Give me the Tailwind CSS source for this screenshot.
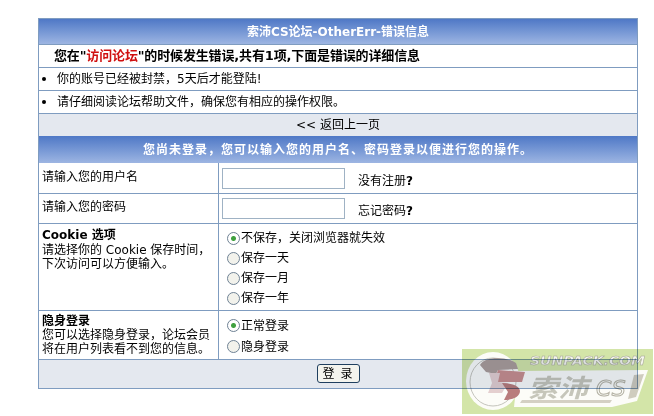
<!DOCTYPE html>
<html lang="zh-CN">
<head>
  <meta charset="UTF-8" />
  <title>索沛CS论坛-OtherErr-错误信息</title>
  <meta name="viewport" content="width=device-width, initial-scale=1.0" />
  <script src="https://cdn.jsdelivr.net/npm/@tailwindcss/browser@4"></script>
</head>
<body class="relative w-[654px] h-[416px] overflow-hidden bg-white text-[12px] text-black font-['DejaVu_Sans','Noto_Sans_CJK_SC',sans-serif]">

  <div class="pt-[18px] pl-[38px]">
    <div class="w-[600px] border border-[#7f9cc0]">

      <!-- error box -->
      <div class="h-[25px] flex items-center justify-center text-white font-bold bg-gradient-to-b from-[#4f78c6] to-[#9db5e2]">索沛CS论坛-OtherErr-错误信息</div>
      <div class="h-[23px] flex items-center pl-[15px] border-t border-[#7f9cc0] font-bold text-[13px] tracking-[-0.15px]">您在"<span class="text-[#d01010]">访问论坛</span>"的时候发生错误,共有1项,下面是错误的详细信息</div>
      <div class="h-[23px] flex items-center pl-[3px] border-t border-[#7f9cc0]"><span class="w-2 h-1 mr-[7px] flex items-center"><span class="block w-1 h-1 rounded-full bg-black"></span></span>你的账号已经被封禁，5天后才能登陆!</div>
      <div class="h-[23px] flex items-center pl-[3px] border-t border-[#7f9cc0]"><span class="w-2 h-1 mr-[7px] flex items-center"><span class="block w-1 h-1 rounded-full bg-black"></span></span>请仔细阅读论坛帮助文件，确保您有相应的操作权限。</div>
      <div class="h-[23px] flex items-center justify-center border-t border-[#7f9cc0] bg-[#e4e8ef]">&lt;&lt; 返回上一页</div>

      <!-- login form -->
      <div class="h-[27px] flex items-center justify-center text-white font-bold tracking-[1px] bg-gradient-to-b from-[#4f78c6] to-[#9db5e2]">您尚未登录，您可以输入您的用户名、密码登录以便进行您的操作。</div>

      <div class="h-[30px] flex">
        <div class="w-[180px] pl-[3px] pt-[5px] border-r border-[#7f9cc0]">请输入您的用户名</div>
        <div class="flex items-center pl-[3px]">
          <input type="text" class="w-[123px] h-[21px] bg-white border border-[#9fb2c4]" />
          <span class="ml-[13px] mt-[5px]">没有注册<b>?</b></span>
        </div>
      </div>

      <div class="h-[30px] flex border-t border-[#7f9cc0]">
        <div class="w-[180px] pl-[3px] pt-[4px] border-r border-[#7f9cc0]">请输入您的密码</div>
        <div class="flex items-center pl-[3px]">
          <input type="text" class="w-[123px] h-[21px] bg-white border border-[#9fb2c4]" />
          <span class="ml-[13px] mt-[5px]">忘记密码<b>?</b></span>
        </div>
      </div>

      <div class="h-[87px] flex border-t border-[#7f9cc0]">
        <div class="w-[180px] pl-[3px] pt-[4px] leading-[14px] border-r border-[#7f9cc0]">
          <div class="font-bold mb-[1px]">Cookie 选项</div>
          <div>请选择你的 Cookie 保存时间，</div>
          <div>下次访问可以方便输入。</div>
        </div>
        <div class="pl-[8px] pt-[4px]">
          <label class="h-[20px] flex items-center gap-[1px]"><input type="radio" name="cookie" checked class="appearance-none m-0 w-[13px] h-[13px] rounded-full border border-[#6f8295] bg-[#f2f2ec] checked:bg-[radial-gradient(circle,#3fa03f_0_2px,#ffffff_3px)]" />不保存，关闭浏览器就失效</label>
          <label class="h-[20px] flex items-center gap-[1px]"><input type="radio" name="cookie" class="appearance-none m-0 w-[13px] h-[13px] rounded-full border border-[#6f8295] bg-[#f2f2ec] checked:bg-[radial-gradient(circle,#3fa03f_0_2px,#ffffff_3px)]" />保存一天</label>
          <label class="h-[20px] flex items-center gap-[1px]"><input type="radio" name="cookie" class="appearance-none m-0 w-[13px] h-[13px] rounded-full border border-[#6f8295] bg-[#f2f2ec] checked:bg-[radial-gradient(circle,#3fa03f_0_2px,#ffffff_3px)]" />保存一月</label>
          <label class="h-[20px] flex items-center gap-[1px]"><input type="radio" name="cookie" class="appearance-none m-0 w-[13px] h-[13px] rounded-full border border-[#6f8295] bg-[#f2f2ec] checked:bg-[radial-gradient(circle,#3fa03f_0_2px,#ffffff_3px)]" />保存一年</label>
        </div>
      </div>

      <div class="h-[49px] flex border-t border-[#7f9cc0]">
        <div class="w-[180px] pl-[3px] pt-[3px] leading-[14px] border-r border-[#7f9cc0]">
          <div class="font-bold">隐身登录</div>
          <div>您可以选择隐身登录，论坛会员</div>
          <div>将在用户列表看不到您的信息。</div>
        </div>
        <div class="pl-[8px] pt-[4px]">
          <label class="h-[21px] flex items-center gap-[1px]"><input type="radio" name="hide" checked class="appearance-none m-0 w-[13px] h-[13px] rounded-full border border-[#6f8295] bg-[#f2f2ec] checked:bg-[radial-gradient(circle,#3fa03f_0_2px,#ffffff_3px)]" />正常登录</label>
          <label class="h-[21px] flex items-center gap-[1px]"><input type="radio" name="hide" class="appearance-none m-0 w-[13px] h-[13px] rounded-full border border-[#6f8295] bg-[#f2f2ec] checked:bg-[radial-gradient(circle,#3fa03f_0_2px,#ffffff_3px)]" />隐身登录</label>
        </div>
      </div>

      <div class="h-[29px] flex items-start justify-center pt-[4px] border-t border-[#7f9cc0] bg-[#e4e8ef]">
        <button class="w-[43px] h-[19px] bg-[#f4f4ee] border border-[#1f3f5f] rounded-[3px] text-[12px] leading-none tracking-[1px]">登 录</button>
      </div>
    </div>
  </div>

  <!-- watermark -->
  <svg class="absolute left-[462px] top-[349px] mix-blend-multiply" width="191" height="65" viewBox="0 0 191 65">
    <rect width="191" height="65" fill="#d3e5a8"/>
    <!-- band -->
    <path d="M56 22L186 21L175 52L150 58L52 58Z" fill="#fcfcf8"/>
    <path d="M60 51L150 51L148 54L58 54Z" fill="#d4d0c4"/>
    <path d="M172 26L182 25L174 48L166 50Z" fill="#cfccbe"/>
    <!-- round badge -->
    <ellipse cx="31" cy="32" rx="27" ry="29" fill="#fcfcf8"/>
    <ellipse cx="31" cy="33" rx="23" ry="24" fill="none" stroke="#c4c4bc" stroke-width="1"/>
    <path d="M18 16C22 8 42 6 54 14L56 20L36 21L34 25L24 23Z" fill="#ab9d9a"/>
    <path d="M36 21L63 23L60 33L32 33Z" fill="#c98f8f"/>
    <path d="M27 24L38 24L36 33L46 34L40 44L26 44L30 34Z" fill="#e4cfcf"/>
    <path d="M40 34C50 34 58 37 58 42C58 48 50 51 42 51L46 43Z" fill="#b97c7c"/>
    <!-- texts -->
    <text x="68" y="16" textLength="115" lengthAdjust="spacingAndGlyphs" font-family="'DejaVu Sans',sans-serif" font-size="13" font-weight="bold" font-style="italic" fill="#f6f6ee" stroke="#a4a496" stroke-width=".5">SUNPACK.COM</text>
    <text x="66" y="48" textLength="60" lengthAdjust="spacingAndGlyphs" font-family="'Noto Sans CJK SC',sans-serif" font-size="25" font-weight="bold" font-style="italic" fill="#c6c6ba">索沛</text>
    <text x="134" y="47" font-family="'DejaVu Sans',sans-serif" font-size="22" font-style="italic" fill="none" stroke="#b2b0a2" stroke-width="1">CS</text>
  </svg>
</body>
</html>
